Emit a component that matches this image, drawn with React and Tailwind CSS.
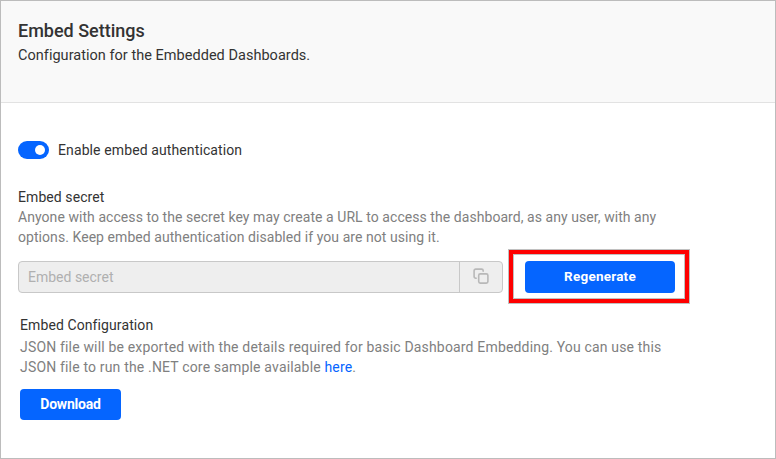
export default function App() {
  return (
    <main className="h-[459px] w-[776px] overflow-hidden border border-[#bcbcbc] bg-white font-[Roboto,sans-serif] text-[14px] leading-5 text-[#333]">
      <header className="h-[102px] border-b border-[#e2e2e2] bg-[#f9f9f9] px-[17px] pt-[18px]">
        <h1 className="text-[18px] font-medium leading-6">Embed Settings</h1>
        <p className="mt-[3px] text-[14.5px] tracking-[0.03px]">Configuration for the Embedded Dashboards.</p>
      </header>
      <div className="px-[17px] pt-[37px]">
        <div className="flex h-5 items-center">
          <span className="flex h-[18px] w-[31px] items-center justify-end rounded-full bg-[#0565ff] pr-1">
            <span className="size-[10px] rounded-full bg-white" />
          </span>
          <span className="ml-[9px] tracking-[0.11px]">Enable embed authentication</span>
        </div>
        <h2 className="mt-[27px] tracking-[0.08px]">Embed secret</h2>
        <p className="tracking-[0.06px] text-[#808080]">
          Anyone with access to the secret key may create a URL to access the dashboard, as any user, with any
          <br />
          options. Keep embed authentication disabled if you are not using it.
        </p>
        <div className="mt-[2px] flex items-start">
          <div className="mt-3 flex h-8 w-[485px] rounded-[4px] border border-[#c8c8c8] bg-[#eee] text-[#b0b0b0]">
            <span className="flex flex-1 items-center pl-[9px]">Embed secret</span>
            <span className="flex w-[43px] justify-center border-l border-[#c8c8c8] pt-[6px]">
              <svg width="16" height="16" viewBox="0 0 16 16" fill="none" stroke="#b8b8b8" strokeWidth="1.6">
                <rect x="5.7" y="5.9" width="9.2" height="9.2" rx="1.6" />
                <path d="M3.8 10.2H2.7a1.6 1.6 0 0 1-1.6-1.6V2.7a1.6 1.6 0 0 1 1.6-1.6h5.9a1.6 1.6 0 0 1 1.6 1.6v1.1" />
              </svg>
            </span>
          </div>
          <div className="ml-[5px] h-[55px] w-[182px] border border-[#c0c0c0]">
            <div className="h-full w-full border-4 border-[#fe0000]">
              <div className="h-full w-full border border-[#c0c0c0] pl-[11px] pt-[6px]">
                <button className="block h-8 w-[150px] rounded-[4px] bg-[#0565ff] pb-[2px] text-[13.5px] font-bold tracking-[0.22px] text-white">Regenerate</button>
              </div>
            </div>
          </div>
        </div>
        <section className="ml-[2px] mt-[11px]">
          <h2 className="tracking-[0.1px]">Embed Configuration</h2>
          <p className="mt-[2px] tracking-[0.17px] text-[#808080]">
            JSON file will be exported with the details required for basic Dashboard Embedding. You can use this
            <br />
            JSON file to run the .NET core sample available <a className="text-[#0565ff]">here</a>.
          </p>
          <button className="mt-3 h-[31px] w-[101px] rounded-[4px] bg-[#0565ff] pb-px font-bold tracking-[-0.22px] text-white">Download</button>
        </section>
      </div>
    </main>
  );
}
